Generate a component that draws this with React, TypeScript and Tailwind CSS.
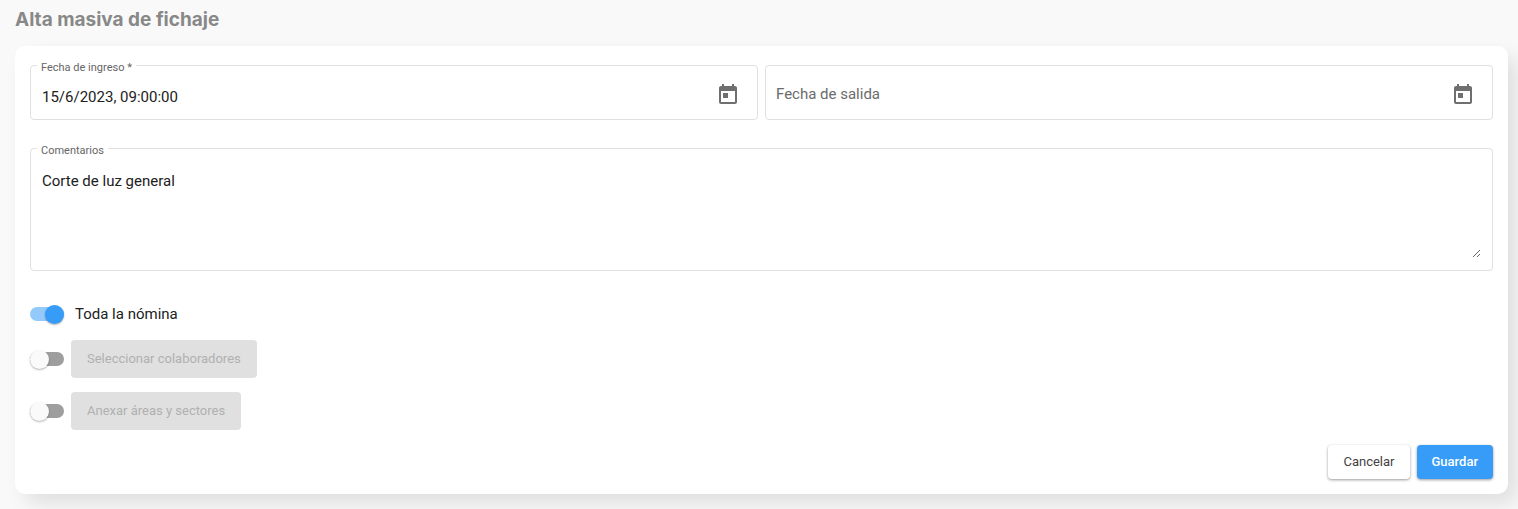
import { useState } from "react";
import { MdToday } from "react-icons/md";
import { clsx } from "clsx";

const FIELD = "relative rounded border border-[#e0e0e0] px-[11px]";
const FLOATING_LABEL = "absolute -top-[6px] left-[6px] bg-white px-1 text-[11px] leading-4 text-[#666]";
const RESTING_LABEL = "pointer-events-none absolute inset-y-0 left-[10px] flex items-center pt-[3px] text-[15px] text-[#6b6b6b]";

interface DateFieldProps {
  id: string;
  label: string;
  initialValue?: string;
  required?: boolean;
}

function DateField({ id, label, initialValue = "", required }: DateFieldProps) {
  const [value, setValue] = useState(initialValue);

  return (
    <div className={clsx(FIELD, "flex h-[55px] flex-1 items-center")}>
      <label htmlFor={id} className={value ? FLOATING_LABEL : RESTING_LABEL}>
        {required ? `${label} *` : label}
      </label>
      <input
        id={id}
        type="text"
        required={required}
        value={value}
        onChange={(e) => setValue(e.target.value)}
        className="min-w-0 flex-1 bg-transparent pt-2 text-[15px] leading-5 text-[#212121] outline-none"
      />
      <button
        type="button"
        aria-label={`Abrir calendario: ${label}`}
        className="mt-1 mr-[6px] text-[#6f6f6f]"
      >
        <MdToday className="size-6" />
      </button>
    </div>
  );
}

interface SwitchProps {
  id: string;
  label?: string;
  checked: boolean;
  onChange: (checked: boolean) => void;
}

function Switch({ id, label, checked, onChange }: SwitchProps) {
  return (
    <input
      id={id}
      type="checkbox"
      role="switch"
      aria-label={label}
      checked={checked}
      onChange={(e) => onChange(e.target.checked)}
      className="flex h-[14px] w-[34px] shrink-0 cursor-pointer appearance-none items-center rounded-full bg-[#9e9e9e] before:size-[19px] before:shrink-0 before:rounded-full before:bg-[#fafafa] before:shadow-[0_1px_2px_rgba(0,0,0,0.3)] checked:justify-end checked:bg-[#94cafb] checked:before:bg-[#369cf8]"
    />
  );
}

const OPTIONS = [
  { id: "colaboradores", label: "Seleccionar colaboradores" },
  { id: "areas", label: "Anexar áreas y sectores" },
];

export default function App() {
  const [scope, setScope] = useState("nomina");
  const [comments, setComments] = useState("Corte de luz general");

  return (
    <main className="min-h-screen bg-[#f9f9f9] pr-[10px] pb-[15px] pl-[15px] font-['Roboto',sans-serif]">
      <h1 className="pt-[6px] pb-3 font-['Inter',sans-serif] text-[19px] leading-7 font-bold text-[#888]">
        Alta masiva de fichaje
      </h1>

      <form
        className="rounded-[10px] bg-white px-[15px] pt-[19px] pb-[15px] shadow-[10px_10px_20px_rgba(0,0,0,0.1)]"
        onSubmit={(e) => e.preventDefault()}
      >
        <div className="flex gap-[7px]">
          <DateField id="ingreso" label="Fecha de ingreso" initialValue="15/6/2023, 09:00:00" required />
          <DateField id="salida" label="Fecha de salida" />
        </div>

        <div className={clsx(FIELD, "mt-7 h-[123px] pt-[22px]")}>
          <label htmlFor="comentarios" className={FLOATING_LABEL}>
            Comentarios
          </label>
          <textarea
            id="comentarios"
            value={comments}
            onChange={(e) => setComments(e.target.value)}
            className="block h-[87px] w-full resize-y bg-transparent text-[15px] leading-5 text-[#212121] outline-none"
          />
        </div>

        <div className="mt-[33px] flex h-5 items-center gap-[11px]">
          <Switch id="nomina" checked={scope === "nomina"} onChange={(on) => setScope(on ? "nomina" : "")} />
          <label htmlFor="nomina" className="text-[15px] leading-5 text-[#212121]">
            Toda la nómina
          </label>
        </div>

        <div className="mt-4 flex flex-col gap-[14px]">
          {OPTIONS.map(({ id, label }) => (
            <div key={id} className="flex items-center gap-[7px]">
              <Switch id={id} label={label} checked={scope === id} onChange={(on) => setScope(on ? id : "")} />
              <button
                type="button"
                disabled={scope !== id}
                className="h-[38px] rounded bg-[#369cf8] px-4 text-[13px] text-white disabled:bg-[#e0e0e0] disabled:text-[#b0b0b0]"
              >
                {label}
              </button>
            </div>
          ))}
        </div>

        <div className="mt-[15px] flex justify-end gap-[7px]">
          <button
            type="button"
            className="h-[34px] rounded bg-white px-[15px] text-[13px] text-[#424242] shadow-[0_1px_3px_rgba(0,0,0,0.4)]"
          >
            Cancelar
          </button>
          <button
            type="submit"
            className="h-[34px] rounded bg-[#369cf8] px-[15px] text-[13px] font-medium text-white shadow-[0_1px_3px_rgba(0,0,0,0.4)]"
          >
            Guardar
          </button>
        </div>
      </form>
    </main>
  );
}
